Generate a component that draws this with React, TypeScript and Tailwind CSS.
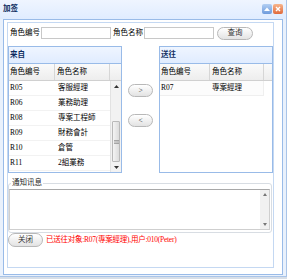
import React from 'react';

const fromRows = [
  ['R05', '客服經理'],
  ['R06', '業務助理'],
  ['R08', '專案工程師'],
  ['R09', '財務會計'],
  ['R10', '倉管'],
  ['R11', '2組業務'],
];

const toRows = [['R07', '專案經理']];

function PillButton({ label, className }: { label: string; className: string }) {
  return (
    <div
      className={`flex items-center justify-center rounded-full border border-[#b8b8b8] bg-gradient-to-b from-white to-[#e3e3e3] text-[7.5px] text-[#333] ${className}`}
    >
      {label}
    </div>
  );
}

function GridHeader({ title, c1, c2 }: { title: string; c1: string; c2: string }) {
  return (
    <>
      <div className="h-[17px] flex items-center pl-[1px] border-b border-[#99bbe8] bg-gradient-to-b from-[#eff5ff] to-[#e0ecff] text-[7.5px] font-bold text-[#0e2d5f]">
        {title}
      </div>
      <div className="h-[17px] flex border-b border-[#d0d0d0] bg-gradient-to-b from-[#fafafa] to-[#ededed] text-[7.5px] text-[#000]">
        <div className={`${c1} flex items-center pl-[1px] border-r border-[#d6d6d6]`}>角色编号</div>
        <div className={`${c2} flex items-center pl-[2px] border-r border-[#d6d6d6]`}>角色名称</div>
        <div className="flex-1" />
      </div>
    </>
  );
}

export default function App() {
  return (
    <div className="w-[287px] h-[279px] bg-[#d6dee8] font-['Liberation_Serif','Noto_Sans_CJK_SC',serif] text-[7.5px] leading-none text-black">
      <div className="w-[287px] h-[277px] flex flex-col bg-[#e9f1fc] border-r border-b border-[#a9c4e8]">
        {/* title bar */}
        <div className="h-[19px] flex items-center justify-between pl-[3px] pr-[3px] pb-[1px] bg-gradient-to-b from-[#eff5ff] to-[#e0ecff]">
          <span className="font-bold text-[#0e2d5f] text-[7.5px]">加签</span>
          <div className="flex gap-[1px]">
            <span className="w-[10px] h-[10px] rounded-[2px] bg-gradient-to-b from-[#b3cff3] to-[#6e9bdc] flex items-center justify-center">
              <svg width="6" height="4" viewBox="0 0 6 4">
                <path d="M0 4 L3 0.5 L6 4 Z" fill="#fff" />
              </svg>
            </span>
            <span className="w-[10px] h-[10px] rounded-[2px] bg-gradient-to-b from-[#f6b58d] to-[#e0693a] flex items-center justify-center">
              <svg width="6" height="6" viewBox="0 0 6 6">
                <path d="M1 1 L5 5 M5 1 L1 5" stroke="#fff" strokeWidth="1.4" />
              </svg>
            </span>
          </div>
        </div>

        {/* body */}
        <div className="mx-[3px] h-[256px] border border-[#99bbe8] bg-white pt-[2px] pl-[3px]">
          <div className="w-[267px] h-[246px] border border-[#c4d8f2] flex flex-col">
            {/* search row */}
            <div className="h-[23px] pb-[3px] pl-[2px] flex items-center">
              <span className="w-[31px]">角色编号</span>
              <div className="w-[70px] h-[12px] border border-[#c8c8c8] bg-white" />
              <span className="ml-[2px] w-[31px]">角色名称</span>
              <div className="w-[70px] h-[12px] border border-[#c8c8c8] bg-white" />
              <PillButton label="查询" className="ml-[3px] w-[36px] h-[13px]" />
            </div>

            {/* grids */}
            <div className="flex h-[127px]">
              <div className="w-[114px] h-[127px] border border-[#99bbe8] flex flex-col">
                <GridHeader title="来自" c1="w-[46px]" c2="w-[55px]" />
                <div className="flex h-[91px]">
                  <div className="w-[101px]">
                    {fromRows.map(([id, name]) => (
                      <div key={id} className="h-[15px] flex items-center border-b border-[#f2f2f2]">
                        <div className="w-[46px] pl-[1px]">{id}</div>
                        <div className="pl-[3px]">{name}</div>
                      </div>
                    ))}
                  </div>
                  <div className="w-[11px] h-[91px] flex flex-col bg-[#f2f2f2] border-l border-[#e2e2e2]">
                    <div className="h-[10px] flex items-center justify-center">
                      <svg width="5" height="3" viewBox="0 0 5 3">
                        <path d="M0 3 L2.5 0 L5 3 Z" fill="#333" />
                      </svg>
                    </div>
                    <div className="mt-[30px] h-[41px] mx-[1px] rounded-[1px] border border-[#b9b9b9] bg-gradient-to-r from-[#f4f4f4] to-[#dcdcdc] flex items-center justify-center">
                      <svg width="5" height="4" viewBox="0 0 5 4">
                        <path d="M0 0.5 H5 M0 2 H5 M0 3.5 H5" stroke="#888" strokeWidth="0.7" />
                      </svg>
                    </div>
                    <div className="mt-auto h-[9px] flex items-center justify-center">
                      <svg width="5" height="3" viewBox="0 0 5 3">
                        <path d="M0 0 L2.5 3 L5 0 Z" fill="#333" />
                      </svg>
                    </div>
                  </div>
                </div>
              </div>

              <div className="w-[37px] flex flex-col items-center pt-[38px] gap-[17px]">
                <PillButton label=">" className="w-[25px] h-[13px]" />
                <PillButton label="<" className="w-[25px] h-[13px]" />
              </div>

              <div className="w-[114px] h-[127px] border border-[#99bbe8] flex flex-col">
                <GridHeader title="送往" c1="w-[50px]" c2="w-[54px]" />
                <div className="h-[91px]">
                  {toRows.map(([id, name]) => (
                    <div key={id} className="w-[104px] h-[15px] flex items-center border-b border-r border-[#efefef] bg-[#fcfcfc]">
                      <div className="w-[50px] pl-[1px]">{id}</div>
                      <div className="pl-[2px]">{name}</div>
                    </div>
                  ))}
                </div>
              </div>
            </div>

            {/* notice fieldset */}
            <fieldset className="mt-[6px] mr-[1px] border border-[#d8dde3] rounded-[3px] pb-[2px]">
              <legend className="ml-[2px] px-[1px] leading-[8px] text-[7.5px] text-[#222]">通知讯息</legend>
              <div className="mt-[2px] ml-[0px] mr-[1px] h-[41px] flex border border-[#cfcfcf] border-t-[#a8a8a8] bg-white">
                <div className="flex-1" />
                <div className="w-[9px] flex flex-col justify-between bg-[#f1f1f1] py-[3px]">
                  <svg className="mx-auto" width="4" height="3" viewBox="0 0 4 3">
                    <path d="M0 3 L2 0 L4 3 Z" fill="#777" />
                  </svg>
                  <svg className="mx-auto" width="4" height="3" viewBox="0 0 4 3">
                    <path d="M0 0 L2 3 L4 0 Z" fill="#777" />
                  </svg>
                </div>
              </div>
            </fieldset>

            {/* bottom row */}
            <div className="flex items-center mt-[0px]">
              <PillButton label="关闭" className="w-[35px] h-[14px]" />
              <span className="ml-[3px] tracking-[-0.25px] text-[#ff0000]">已送往对象:R07(專案經理),用户:010(Peter)</span>
            </div>
          </div>
        </div>
      </div>
    </div>
  );
}
